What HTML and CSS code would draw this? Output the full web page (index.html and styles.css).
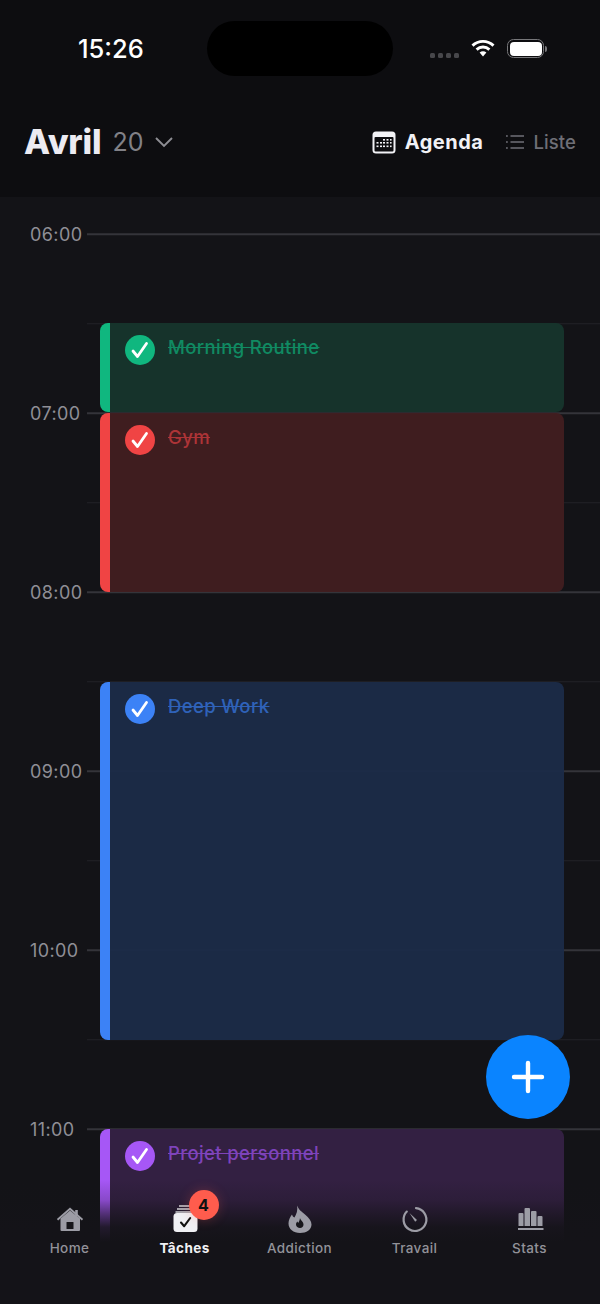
FILE: index.html
```html
<!DOCTYPE html>
<html lang="fr">
<head>
<meta charset="utf-8">
<title>Tâches</title>
<link rel="stylesheet" href="styles.css">
</head>
<body>
<div class="app">
  <header class="top">
    <div class="status">
      <span class="clock">15:26</span>
      <div class="island"></div>
      <div class="status-icons">
        <div class="signal"><i></i><i></i><i></i><i></i></div>
        <svg class="wifi" width="24" height="18" viewBox="0 0 24 18"><path d="M1.500 6.600C7.400 1 16.600 1 22.500 6.600" fill="none" stroke="#fff" stroke-width="2.900"/><path d="M5.600 10.600C9.300 7.200 14.700 7.200 18.400 10.600" fill="none" stroke="#fff" stroke-width="2.900"/><path d="M8.600 13.600C10.600 11.900 13.400 11.900 15.400 13.600L12 17.400Z" fill="#fff"/></svg>
        <div class="battery"><div class="battery-fill"></div></div>
        <div class="battery-cap"></div>
      </div>
    </div>
    <div class="bar">
      <div class="month">
        <h1>Avril</h1>
        <span class="day">20</span>
        <svg class="chevron" width="20" height="12" viewBox="0 0 20 12"><path d="M2 2l8 8 8-8" fill="none" stroke="#8e8e94" stroke-width="1.900"/></svg>
      </div>
      <div class="views">
        <div class="view view-on">
          <svg width="24" height="23" viewBox="0 0 24 23"><rect x="0.500" y="0.500" width="23" height="22" rx="3.500" fill="#f2f2f6"/><rect x="2.500" y="6" width="19" height="14.500" rx="1" fill="#0d0d10"/><g fill="#f2f2f6"><rect x="11" y="8" width="2" height="1.600"/><rect x="14.500" y="8" width="2" height="1.600"/><rect x="18" y="8" width="1.600" height="1.600"/><rect x="4.500" y="11" width="2" height="1.600"/><rect x="8" y="11" width="2" height="1.600"/><rect x="11" y="11" width="2" height="1.600"/><rect x="14.500" y="11" width="2" height="1.600"/><rect x="18" y="11" width="1.600" height="1.600"/><rect x="4.500" y="14.500" width="2" height="1.600"/><rect x="8" y="14.500" width="2" height="1.600"/><rect x="11" y="14.500" width="2" height="1.600"/><rect x="14.500" y="14.500" width="2" height="1.600"/><rect x="18" y="14.500" width="1.600" height="1.600"/></g></svg>
          <span>Agenda</span>
        </div>
        <div class="view">
          <svg width="18" height="16" viewBox="0 0 18 16"><g stroke="#6f6f77" stroke-width="1.400" fill="none"><path d="M4.500 2H18M4.500 8H18M4.500 14H18"/><path d="M0 2h1.800M0 8h1.800M0 14h1.800"/></g></svg>
          <span>Liste</span>
        </div>
      </div>
    </div>
  </header>

  <main class="agenda">
    <div class="row hour"><span class="time">06:00</span><span class="rule"></span></div>
    <div class="row half"><span class="time"></span><span class="rule"></span></div>
    <div class="row hour"><span class="time">07:00</span><span class="rule"></span></div>
    <div class="row half"><span class="time"></span><span class="rule"></span></div>
    <div class="row hour"><span class="time">08:00</span><span class="rule"></span></div>
    <div class="row half"><span class="time"></span><span class="rule"></span></div>
    <div class="row hour"><span class="time">09:00</span><span class="rule"></span></div>
    <div class="row half"><span class="time"></span><span class="rule"></span></div>
    <div class="row hour"><span class="time">10:00</span><span class="rule"></span></div>
    <div class="row half"><span class="time"></span><span class="rule"></span></div>
    <div class="row hour"><span class="time">11:00</span><span class="rule"></span></div>

    <article class="event green slot-morning">
      <span class="tick"><svg width="18" height="20" viewBox="0 0 18 20"><path d="M2 11l4.500 5.500L15.500 3.500" fill="none" stroke="#fff" stroke-width="2.800" stroke-linecap="round" stroke-linejoin="round"/></svg></span>
      <span class="name">Morning Routine</span>
    </article>
    <article class="event red slot-gym">
      <span class="tick"><svg width="18" height="20" viewBox="0 0 18 20"><path d="M2 11l4.500 5.500L15.500 3.500" fill="none" stroke="#fff" stroke-width="2.800" stroke-linecap="round" stroke-linejoin="round"/></svg></span>
      <span class="name">Gym</span>
    </article>
    <article class="event blue slot-deep">
      <span class="tick"><svg width="18" height="20" viewBox="0 0 18 20"><path d="M2 11l4.500 5.500L15.500 3.500" fill="none" stroke="#fff" stroke-width="2.800" stroke-linecap="round" stroke-linejoin="round"/></svg></span>
      <span class="name">Deep Work</span>
    </article>
    <article class="event purple slot-project">
      <span class="tick"><svg width="18" height="20" viewBox="0 0 18 20"><path d="M2 11l4.500 5.500L15.500 3.500" fill="none" stroke="#fff" stroke-width="2.800" stroke-linecap="round" stroke-linejoin="round"/></svg></span>
      <span class="name">Projet personnel</span>
    </article>
  </main>

  <button class="fab" aria-label="Ajouter">
    <svg width="34" height="34" viewBox="0 0 34 34"><path d="M17 3v28M3 17h28" stroke="#fff" stroke-width="4.400" stroke-linecap="round"/></svg>
  </button>

  <nav class="tabs">
    <div class="tab">
      <svg class="tab-icon" width="28" height="26" viewBox="0 0 28 26"><path d="M4.500 11.500L14 3.400l10 8.100V23a1 1 0 0 1-1 1H5.500a1 1 0 0 1-1-1Z" fill="#9c9ca5"/><path d="M19.200 3h2.600v6h-2.600Z" fill="#9c9ca5"/><path d="M1.500 12.800L14 1.800l12.500 11" fill="none" stroke="#9c9ca5" stroke-width="1.900"/><rect x="10.500" y="15" width="7" height="7" rx="0.500" fill="#17161b"/></svg>
      <span>Home</span>
    </div>
    <div class="tab tab-on">
      <div class="tab-art">
        <svg class="tab-icon" width="28" height="26" viewBox="0 0 28 26"><path d="M8 -1h12M6 2h16M4.500 5h19" stroke="#cfcfd4" stroke-width="1.300"/><rect x="2.500" y="6" width="24" height="19" rx="3.500" fill="#f0f0f4"/><path d="M10 15.500l3.200 3.700L19.200 11" fill="none" stroke="#111" stroke-width="2.100" stroke-linecap="round" stroke-linejoin="round"/></svg>
        <b class="badge">4</b>
      </div>
      <span>Tâches</span>
    </div>
    <div class="tab">
      <svg class="tab-icon" width="28" height="26" viewBox="0 0 28 26"><path d="M11 -1.500C13 3 15 4 19 7.500C23 11 25.500 14 25.500 17.500C25.500 22.500 20.500 26 14 26C7.500 26 2.500 22 2.500 16.500C2.500 13 4 10 6 7.500C6.500 9 7.200 10 8.500 10.500C10.500 7 12 3 11 -1.500Z" fill="#9c9ca5"/><path d="M14 11c.3 2 3.500 3.500 3.500 6.500c0 2.200-1.500 3.500-3.500 3.500s-4-1.300-4-3.500c0-1.500.7-2.200 1.500-3c.2.8.5 1.200 1 1.300c.6-1.300 1.200-2.800 1.500-4.800Z" fill="#17161b"/></svg>
      <span>Addiction</span>
    </div>
    <div class="tab">
      <svg class="tab-icon" width="28" height="26" viewBox="0 0 28 26"><path d="M15 1.200A11.400 11.400 0 1 1 5.800 4.600" fill="none" stroke="#9c9ca5" stroke-width="2.200" stroke-linecap="round"/><path d="M8.500 6L16 13l-1.800 1.800Z" fill="#9c9ca5"/></svg>
      <span>Travail</span>
    </div>
    <div class="tab">
      <svg class="tab-icon" width="28" height="26" viewBox="0 0 28 26"><g fill="#9c9ca5"><path d="M2.500 19V7a1 1 0 0 1 1-1h3a1 1 0 0 1 1 1v12Z"/><path d="M8.500 19V2a1 1 0 0 1 1-1h3.500a1 1 0 0 1 1 1v17Z"/><path d="M15 19V5a1 1 0 0 1 1-1h3.500a1 1 0 0 1 1 1v14Z"/><path d="M21.500 19V10a1 1 0 0 1 1-1h3a1 1 0 0 1 1 1v9Z"/><rect x="2" y="21" width="25.500" height="2"/></g></svg>
      <span>Stats</span>
    </div>
  </nav>
</div>
</body>
</html>
```

FILE: styles.css
```css
* { box-sizing: border-box; }

html, body {
  margin: 0;
  padding: 0;
  background: #131317;
}

.app {
  position: relative;
  width: 600px;
  height: 1304px;
  overflow: hidden;
  background: #131317;
  font-family: Inter, "Noto Sans", sans-serif;
  color: #f2f2f6;
}

/* Header */
.top {
  height: 197px;
  background: #0d0d10;
}

.status {
  position: relative;
  height: 100px;
}

.clock {
  position: absolute;
  left: 78px;
  top: 34px;
  font-size: 25.500px;
  line-height: 30px;
  font-weight: 500;
  color: #fff;
}

.island {
  position: absolute;
  left: 207px;
  top: 21px;
  width: 186px;
  height: 55px;
  border-radius: 28px;
  background: #000;
}

.status-icons {
  position: absolute;
  left: 430px;
  top: 38px;
  display: flex;
  align-items: flex-start;
}

.signal {
  display: flex;
  gap: 3px;
  margin-top: 15px;
  margin-right: 12px;
}

.signal i {
  display: block;
  width: 5px;
  height: 5px;
  border-radius: 1.500px;
  background: #47474b;
}

.wifi {
  margin-top: 1px;
  margin-right: 12px;
}

.battery {
  width: 37px;
  height: 19px;
  margin-top: 1px;
  padding: 1.500px;
  border: 1.500px solid #77777a;
  border-radius: 6.500px;
}

.battery-fill {
  width: 100%;
  height: 100%;
  border-radius: 4px;
  background: #fff;
}

.battery-cap {
  width: 2px;
  height: 6px;
  margin-top: 7.500px;
  margin-left: 1px;
  border-radius: 0 2px 2px 0;
  background: #77777a;
}

.bar {
  display: flex;
  justify-content: space-between;
  align-items: center;
  height: 84px;
  padding: 0 24px;
}

.month {
  display: flex;
  align-items: center;
}

.month h1 {
  margin: 0;
  font-size: 34px;
  line-height: 40px;
  font-weight: 800;
  letter-spacing: -0.200px;
  color: #ecebf2;
}

.day {
  margin-left: 11px;
  margin-right: 11px;
  font-size: 25px;
  line-height: 40px;
  color: #818187;
}

.views {
  display: flex;
  align-items: center;
  gap: 23px;
}

.view {
  display: flex;
  align-items: center;
  gap: 9px;
  font-size: 18.500px;
  letter-spacing: 0.100px;
  color: #6f6f77;
  font-weight: 500;
}

.view-on {
  gap: 9px;
  font-weight: 700;
  color: #f2f2f6;
  font-size: 20px;
  letter-spacing: 0.500px;
}

/* Timeline */
.agenda {
  position: relative;
  padding-top: 37px;
}

.row {
  display: flex;
  align-items: center;
  height: 89.500px;
}

.row .time,
.row .rule {
  transform: translateY(-44.750px);
}

.time {
  flex: 0 0 87px;
  height: 20px;
  margin-top: 2px;
  padding-left: 30px;
  font-size: 18px;
  line-height: 20px;
  letter-spacing: 0.400px;
  color: #8f8f96;
}

.rule {
  flex: 1;
  height: 1.500px;
}

.hour .rule { background: #34343a; }
.half .rule { height: 1px; background: #232328; }

/* Events */
.event {
  position: absolute;
  left: 100px;
  width: 464px;
  display: flex;
  align-items: flex-start;
  gap: 13px;
  padding: 12px 0 0 15px;
  border-left: 10px solid;
  border-radius: 8px;
}

.slot-morning { top: 126px; height: 89px; }
.slot-gym { top: 216px; height: 179px; }
.slot-deep { top: 485px; height: 358px; }
.slot-project { top: 932px; height: 179px; }

.green { background: rgba(22, 53, 44, 0.95); border-color: #10b77f; }
.red { background: rgba(65, 30, 32, 0.95); border-color: #f04444; }
.blue { background: rgba(27, 43, 72, 0.95); border-color: #3c82f6; }
.purple { background: rgba(53, 33, 69, 0.95); border-color: #a657f6; }

.tick {
  flex: none;
  display: flex;
  align-items: center;
  justify-content: center;
  width: 30px;
  height: 30px;
  border-radius: 50%;
}

.green .tick { background: #10b77f; }
.red .tick { background: #f04444; }
.blue .tick { background: #3c82f6; }
.purple .tick { background: #a657f6; }

.name {
  font-size: 18.500px;
  line-height: 24px;
  font-weight: 500;
  letter-spacing: 0.380px;
  text-decoration: line-through;
}

.green .name { color: #108a62; }
.red .name { color: #ad3437; }
.blue .name { color: #2f62b9; }
.purple .name { color: #7e43bb; }

/* Floating button */
.fab {
  position: absolute;
  left: 486px;
  top: 1035px;
  width: 84px;
  height: 84px;
  padding: 0;
  border: 0;
  border-radius: 50%;
  display: flex;
  align-items: center;
  justify-content: center;
  background: #0a84ff;
}

/* Tab bar */
.tabs {
  position: absolute;
  left: 0;
  right: 0;
  bottom: 0;
  height: 124px;
  padding: 27px 12px 0;
  display: grid;
  grid-template-columns: repeat(5, 115px);
  background: linear-gradient(to bottom, rgba(20, 19, 24, 0) 0, rgba(20, 19, 24, 0.2) 20px, rgba(20, 19, 24, 0.55) 33px, rgba(20, 19, 24, 0.9) 47px, #141318 62px);
}

.tab {
  display: flex;
  flex-direction: column;
  align-items: center;
  gap: 6px;
  font-size: 13.500px;
  line-height: 18px;
  font-weight: 500;
  letter-spacing: 0.400px;
  color: #929299;
}

.tab-on {
  color: #f0f0f4;
  font-weight: 700;
}

.tab-icon {
  display: block;
  overflow: visible;
}

.tab-art {
  position: relative;
  height: 26px;
}

.badge {
  position: absolute;
  left: 18px;
  top: -17px;
  width: 30px;
  height: 30px;
  border-radius: 50%;
  display: flex;
  align-items: center;
  justify-content: center;
  background: #ff5c4d;
  color: #111;
  font-size: 16px;
  font-weight: 700;
  letter-spacing: 0;
  box-shadow: 0 0 12px rgba(255, 92, 77, 0.25);
}
```
